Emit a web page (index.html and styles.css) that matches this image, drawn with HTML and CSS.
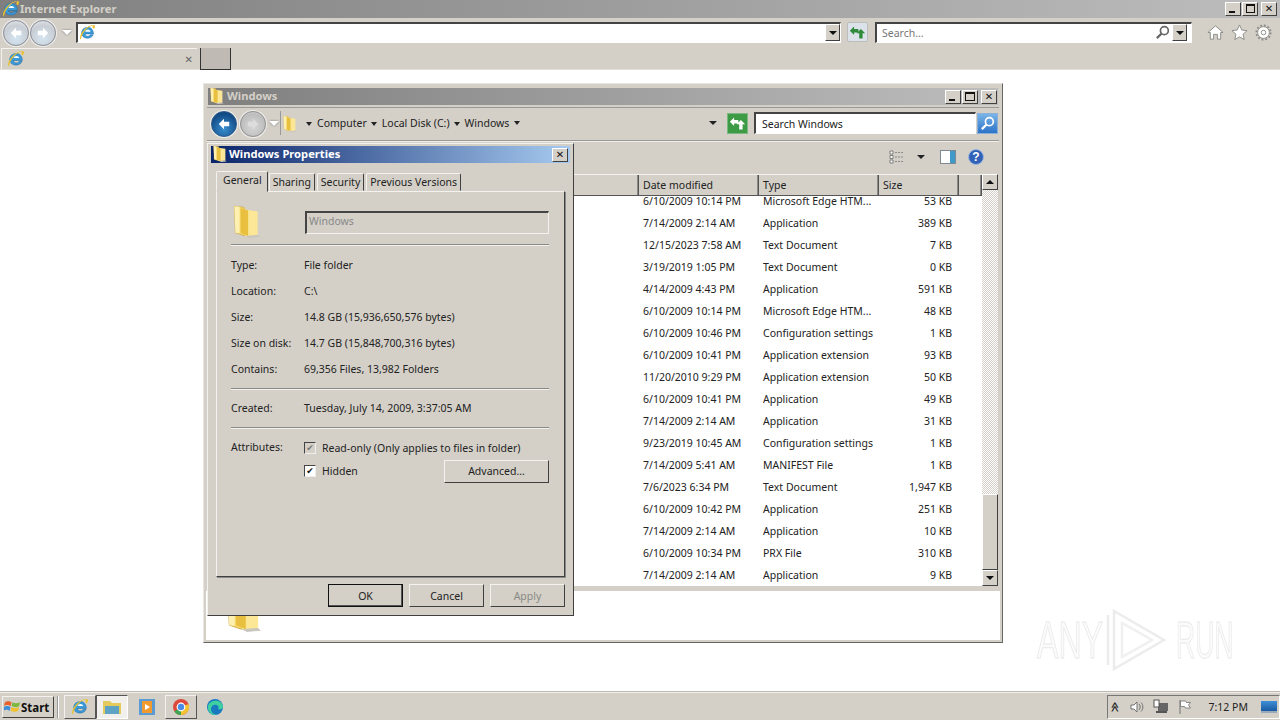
FILE: index.html
```html
<!DOCTYPE html>
<html lang="en">
<head>
    <meta charset="UTF-8">
    <title>Internet Explorer</title>
    <link rel="stylesheet" href="styles.css">
</head>
<body>
    <svg class="defs" width="0" height="0">
        <symbol id="ie" viewBox="0 0 20 20">
            <path d="M3 10.5a7 7 0 0 1 13.6-1.8c.3 1 .4 2 .4 3H7.2c.3 3 4 3.800 6.300 1h3.200c-2 4.500-8.700 5.300-12 2-1.300-1.200-1.700-2.600-1.700-4.200z" fill="#3a9bd8" stroke="#1c6aa8" stroke-width=".6"/>
            <path d="M7.300 9h6.200c-.4-3-5.800-3-6.200 0z" fill="#fff"/>
            <path d="M1.500 18C0 15 4 7 10 3.500 14 1 18 .5 18.800 2c.5 1-.3 2.600-1.300 4-.6-1-1.300-1.800-2-2.400 1-.6 1.500-1.300 1.200-1.700C15.800 1 7 4.500 3 15c-.6 1.500-.8 2.400-.5 3z" fill="#e8c22e"/>
        </symbol>
        <symbol id="folder" viewBox="0 0 26 32">
            <path d="M8 28l16 1 2 2-10 1z" fill="#c9c6be"/>
            <path d="M2 2l9 1 1 3v24l-9-3z" fill="#f5d76a" stroke="#c9a53c" stroke-width=".6"/>
            <path d="M11 5l13 2v22l-12 1z" fill="#fbe795"/>
            <path d="M8 4l7 2v24l-7-3z" fill="#e8bf3e"/>
            <path d="M2 2l5 .6v25L3 27z" fill="#fdf0b0"/>
        </symbol>
        <symbol id="arrow-left" viewBox="0 0 24 24">
            <path d="M5 12l7-7v4h7v6h-7v4z"/>
        </symbol>
        <symbol id="refresh" viewBox="0 0 20 20">
            <path d="M1 8l5-5v3h5v4H6v3zM14 6l5 5h-3v6h-4v-6H9z"/>
        </symbol>
        <symbol id="lens" viewBox="0 0 16 16">
            <circle cx="10" cy="6" r="4.200" fill="none" stroke="currentColor" stroke-width="1.800"/>
            <path d="M7 9l-5 5" stroke="currentColor" stroke-width="2.400" fill="none"/>
        </symbol>
    </svg>

    <div class="ie-title">
        <svg class="icon-16"><use href="#ie"/></svg>
        <span class="ie-title-text">Internet Explorer</span>
        <div class="caption-btns">
            <button class="cap-btn"><span class="glyph-min"></span></button>
            <button class="cap-btn"><span class="glyph-restore"></span></button>
            <button class="cap-btn cap-close">✕</button>
        </div>
    </div>

    <div class="ie-toolbar">
        <div class="nav-circle"><svg class="nav-arrow"><use href="#arrow-left"/></svg></div>
        <div class="nav-circle nav-forward"><svg class="nav-arrow"><use href="#arrow-left"/></svg></div>
        <span class="nav-drop"></span>
        <div class="field address">
            <svg class="icon-16"><use href="#ie"/></svg>
            <span class="drop-btn"><i></i></span>
        </div>
        <div class="go-btn"><svg class="go-icon"><use href="#refresh"/></svg></div>
        <div class="field search">
            <span class="placeholder">Search...</span>
            <svg class="search-lens"><use href="#lens"/></svg>
            <span class="drop-btn"><i></i></span>
        </div>
        <div class="ie-tools">
            <svg class="tool-icon" viewBox="0 0 18 18"><path d="M1 9l8-7 8 7h-2.500v7H11v-5H7v5H3.500V9z" fill="#fff" stroke="#8a8a86"/></svg>
            <svg class="tool-icon" viewBox="0 0 18 18"><path d="M9 1l2.400 5.400 5.600.6-4.200 3.800 1.200 5.700L9 13.600l-5 2.900 1.200-5.700L1 7l5.600-.6z" fill="#fff" stroke="#8a8a86"/></svg>
            <svg class="tool-icon" viewBox="0 0 18 18"><circle cx="9" cy="9" r="6.200" fill="#fff" stroke="#8a8a86" stroke-width="1"/><circle cx="9" cy="9" r="7.600" fill="none" stroke="#8a8a86" stroke-width="1.800" stroke-dasharray="2 2"/><circle cx="9" cy="9" r="2.400" fill="none" stroke="#8a8a86"/></svg>
        </div>
    </div>

    <div class="ie-tabs">
        <div class="tab-page">
            <svg class="icon-16"><use href="#ie"/></svg>
            <span class="tab-close">✕</span>
        </div>
        <div class="tab-new"></div>
    </div>

    <div class="page">
        <div class="watermark">
            <span class="wm-any">ANY</span>
            <svg class="wm-logo" viewBox="0 0 66 62"><path d="M3 6v50M9 2v58l50-29z" fill="none" stroke="#ececec" stroke-width="2.500"/><path d="M17 14v34l30-17z" fill="none" stroke="#f0f0f0" stroke-width="2.500"/></svg>
            <span class="wm-run">RUN</span>
        </div>

        <div class="explorer">
            <div class="exp-title">
                <svg class="icon-folder-sm"><use href="#folder"/></svg>
                <span>Windows</span>
                <div class="caption-btns">
                    <button class="cap-btn"><span class="glyph-min"></span></button>
                    <button class="cap-btn"><span class="glyph-max"></span></button>
                    <button class="cap-btn cap-close">✕</button>
                </div>
            </div>

            <div class="exp-address">
                <div class="nav-circle nav-blue"><svg class="nav-arrow"><use href="#arrow-left"/></svg></div>
                <div class="nav-circle nav-gray"><svg class="nav-arrow"><use href="#arrow-left"/></svg></div>
                <span class="nav-drop"></span>
                <div class="crumbs">
                    <svg class="icon-folder-sm crumb-folder"><use href="#folder"/></svg>
                    <span class="crumb">Computer</span>
                    <span class="crumb">Local Disk (C:)</span>
                    <span class="crumb">Windows</span>
                    <span class="crumb-tail"></span>
                    <span class="crumb-drop"></span>
                </div>
                <div class="go-green"><svg class="go-icon"><use href="#refresh"/></svg></div>
                <div class="field exp-search">Search Windows</div>
                <div class="search-blue"><svg class="blue-lens"><use href="#lens"/></svg></div>
            </div>

            <div class="exp-tools">
                <svg class="view-icon" viewBox="0 0 16 14"><path d="M1 1h3v3H1zM1 5.500h3v3H1zM1 10h3v3H1z" fill="#fff" stroke="#666" stroke-width=".8"/><path d="M6 2.500h9M6 7h9M6 11.500h9" stroke="#8a8a86" stroke-dasharray="2 1"/></svg>
                <span class="view-drop"></span>
                <svg class="pane-icon" viewBox="0 0 16 14"><rect x=".5" y=".5" width="15" height="13" fill="#fff" stroke="#7d8a96"/><rect x="10" y="1" width="5" height="12" fill="#3f9ac9"/></svg>
                <svg class="help-icon" viewBox="0 0 16 16"><circle cx="8" cy="8" r="7.500" fill="#3262b8" stroke="#9db7dd"/><text x="8" y="12" text-anchor="middle" class="help-q">?</text></svg>
            </div>

            <div class="listing">
                <div class="list-main">
                    <div class="list-head">
                        <div class="col-name head-cell"></div>
                        <div class="col-date head-cell">Date modified</div>
                        <div class="col-type head-cell">Type</div>
                        <div class="col-size head-cell">Size</div>
                        <div class="col-extra head-cell"></div>
                    </div>
                    <div class="list-body">
                        <div class="rows">
                            <div class="row"><span class="col-name"></span><span class="col-date">6/10/2009 10:14 PM</span><span class="col-type">Microsoft Edge HTM...</span><span class="col-size">53 KB</span></div>
                            <div class="row"><span class="col-name"></span><span class="col-date">7/14/2009 2:14 AM</span><span class="col-type">Application</span><span class="col-size">389 KB</span></div>
                            <div class="row"><span class="col-name"></span><span class="col-date">12/15/2023 7:58 AM</span><span class="col-type">Text Document</span><span class="col-size">7 KB</span></div>
                            <div class="row"><span class="col-name"></span><span class="col-date">3/19/2019 1:05 PM</span><span class="col-type">Text Document</span><span class="col-size">0 KB</span></div>
                            <div class="row"><span class="col-name"></span><span class="col-date">4/14/2009 4:43 PM</span><span class="col-type">Application</span><span class="col-size">591 KB</span></div>
                            <div class="row"><span class="col-name"></span><span class="col-date">6/10/2009 10:14 PM</span><span class="col-type">Microsoft Edge HTM...</span><span class="col-size">48 KB</span></div>
                            <div class="row"><span class="col-name"></span><span class="col-date">6/10/2009 10:46 PM</span><span class="col-type">Configuration settings</span><span class="col-size">1 KB</span></div>
                            <div class="row"><span class="col-name"></span><span class="col-date">6/10/2009 10:41 PM</span><span class="col-type">Application extension</span><span class="col-size">93 KB</span></div>
                            <div class="row"><span class="col-name"></span><span class="col-date">11/20/2010 9:29 PM</span><span class="col-type">Application extension</span><span class="col-size">50 KB</span></div>
                            <div class="row"><span class="col-name"></span><span class="col-date">6/10/2009 10:41 PM</span><span class="col-type">Application</span><span class="col-size">49 KB</span></div>
                            <div class="row"><span class="col-name"></span><span class="col-date">7/14/2009 2:14 AM</span><span class="col-type">Application</span><span class="col-size">31 KB</span></div>
                            <div class="row"><span class="col-name"></span><span class="col-date">9/23/2019 10:45 AM</span><span class="col-type">Configuration settings</span><span class="col-size">1 KB</span></div>
                            <div class="row"><span class="col-name"></span><span class="col-date">7/14/2009 5:41 AM</span><span class="col-type">MANIFEST File</span><span class="col-size">1 KB</span></div>
                            <div class="row"><span class="col-name"></span><span class="col-date">7/6/2023 6:34 PM</span><span class="col-type">Text Document</span><span class="col-size">1,947 KB</span></div>
                            <div class="row"><span class="col-name"></span><span class="col-date">6/10/2009 10:42 PM</span><span class="col-type">Application</span><span class="col-size">251 KB</span></div>
                            <div class="row"><span class="col-name"></span><span class="col-date">7/14/2009 2:14 AM</span><span class="col-type">Application</span><span class="col-size">10 KB</span></div>
                            <div class="row"><span class="col-name"></span><span class="col-date">6/10/2009 10:34 PM</span><span class="col-type">PRX File</span><span class="col-size">310 KB</span></div>
                            <div class="row"><span class="col-name"></span><span class="col-date">7/14/2009 2:14 AM</span><span class="col-type">Application</span><span class="col-size">9 KB</span></div>
                        </div>
                    </div>
                </div>
                <div class="scrollbar">
                    <div class="sb-btn"><i class="tri-up"></i></div>
                    <div class="sb-track"></div>
                    <div class="sb-thumb"></div>
                    <div class="sb-btn"><i class="tri-down"></i></div>
                </div>
            </div>
            <div class="details-pane">
                <svg class="details-folder"><use href="#folder"/></svg>
            </div>
        </div>

        <div class="dialog">
            <div class="dlg-title">
                <svg class="icon-folder-sm"><use href="#folder"/></svg>
                <span>Windows Properties</span>
                <button class="cap-btn cap-close">✕</button>
            </div>
            <div class="dlg-tabs">
                <div class="dlg-tab dlg-tab-on">General</div>
                <div class="dlg-tab">Sharing</div>
                <div class="dlg-tab">Security</div>
                <div class="dlg-tab">Previous Versions</div>
            </div>
            <div class="dlg-panel">
                <div class="name-row">
                    <svg class="big-folder"><use href="#folder"/></svg>
                    <div class="name-input">Windows</div>
                </div>
                <hr class="sep">
                <div class="props">
                    <div class="prop"><span class="prop-label">Type:</span><span>File folder</span></div>
                    <div class="prop"><span class="prop-label">Location:</span><span>C:\</span></div>
                    <div class="prop"><span class="prop-label">Size:</span><span>14.8 GB (15,936,650,576 bytes)</span></div>
                    <div class="prop"><span class="prop-label">Size on disk:</span><span>14.7 GB (15,848,700,316 bytes)</span></div>
                    <div class="prop"><span class="prop-label">Contains:</span><span>69,356 Files, 13,982 Folders</span></div>
                </div>
                <hr class="sep sep-contains">
                <div class="prop prop-created"><span class="prop-label">Created:</span><span>Tuesday, July 14, 2009, 3:37:05 AM</span></div>
                <hr class="sep sep-created">
                <div class="attrs">
                    <span class="prop-label">Attributes:</span>
                    <div class="attr-list">
                        <div class="attr-line">
                            <span class="check check-off">✔</span>
                            <span>Read-only (Only applies to files in folder)</span>
                        </div>
                        <div class="attr-line attr-hidden">
                            <span class="check">✔</span>
                            <span>Hidden</span>
                            <button class="btn btn-advanced">Advanced...</button>
                        </div>
                    </div>
                </div>
            </div>
            <div class="dlg-buttons">
                <button class="btn btn-default">OK</button>
                <button class="btn">Cancel</button>
                <button class="btn btn-disabled">Apply</button>
            </div>
        </div>
    </div>

    <div class="taskbar">
        <button class="start-btn">
            <svg class="start-flag" viewBox="0 0 18 16"><path d="M1 3c3-2 5-1 7 0L7 7C5 6 3 5 0 7z" fill="#e8622a"/><path d="M9 3c2 1 5 2 8 0l-1 4c-3 2-5 1-8 0z" fill="#7cb83e"/><path d="M0 8c3-2 5-1 7 0l-1 4c-2-1-4-2-7 0z" fill="#3f8ed8"/><path d="M8 8c2 1 5 2 8 0l-1 4c-3 2-5 1-8 0z" fill="#f0c030"/></svg>
            <span>Start</span>
        </button>
        <span class="task-grip"></span>
        <div class="task-btn task-ie"><svg class="icon-16"><use href="#ie"/></svg></div>
        <div class="task-btn task-active">
            <svg class="task-folder" viewBox="0 0 20 18"><path d="M1 3h7l2 2h9v11H1z" fill="#e6c95c"/><path d="M3 8h14v8H3z" fill="#5fa3c4"/></svg>
        </div>
        <div class="task-plain">
            <svg class="icon-16" viewBox="0 0 18 18"><rect x="1" y="1" width="16" height="16" fill="#5a9bd4"/><rect x="4" y="3" width="10" height="12" fill="#f29a2e"/><path d="M7 6l5 3-5 3z" fill="#fff"/></svg>
        </div>
        <div class="task-btn">
            <svg class="icon-16" viewBox="0 0 18 18"><circle cx="9" cy="9" r="8" fill="#dd4a3c"/><path d="M9 9L2.300 13.500A8 8 0 0 0 9 17z" fill="#3fa553"/><path d="M9 9l0 8a8 8 0 0 0 7.500-11z" fill="#f4c430"/><circle cx="9" cy="9" r="3.800" fill="#4a8be8" stroke="#fff" stroke-width="1.200"/></svg>
        </div>
        <div class="task-plain">
            <svg class="icon-16" viewBox="0 0 18 18"><circle cx="9" cy="9" r="8" fill="#1878c0"/><path d="M2 8c1-6 13-8 15 0 .5 3-3 4-5 3 2-2-1-5-4-4-4 1-4 7 0 9 1 .5 2 .5 3 .5C7 18 1 15 2 8z" fill="#3ed0a0"/></svg>
        </div>
        <div class="tray">
            <span class="tray-chev">≫</span>
            <svg class="tray-icon" viewBox="0 0 16 16"><path d="M2 6h3l3-3v10l-3-3H2z" fill="#fff" stroke="#707070"/><path d="M10 5c1.500 1.500 1.500 4.500 0 6M12 3.500c2.500 2.500 2.500 6.500 0 9" fill="none" stroke="#707070"/></svg>
            <svg class="tray-icon" viewBox="0 0 16 16"><rect x="5" y="4" width="10" height="8" fill="#666"/><rect x="1" y="1" width="5" height="7" fill="#fff" stroke="#555"/><path d="M3 13h11" stroke="#555" stroke-width="2"/></svg>
            <svg class="tray-icon" viewBox="0 0 16 16"><path d="M3 1v14" stroke="#707070"/><path d="M3.500 2h5l1 1.500h4L11.500 6l2 3h-5l-1-1.500h-4z" fill="#fff" stroke="#707070" stroke-width=".8"/></svg>
            <span class="clock">7:12 PM</span>
            <span class="show-desktop"></span>
        </div>
    </div>
</body>
</html>
```

FILE: styles.css
```css
* {
    margin: 0;
    padding: 0;
    box-sizing: border-box;
}

body {
    width: 1280px;
    height: 720px;
    overflow: hidden;
    display: flex;
    flex-direction: column;
    background: #d4d0c8;
    font-family: 'Noto Sans', 'DejaVu Sans', sans-serif;
    font-size: 10.5px;
    color: #222;
    position: relative;
}

.defs {
    position: absolute;
}

svg {
    display: block;
    flex: none;
    fill: currentColor;
}

.icon-16 {
    width: 18px;
    height: 18px;
}

.icon-folder-sm {
    width: 15px;
    height: 17px;
}

/* shared bits */
.caption-btns {
    margin-left: auto;
    display: flex;
    gap: 1px;
}

.cap-btn {
    width: 16px;
    height: 14px;
    background: #d4d0c8;
    border: 1px solid;
    border-color: #fff #404040 #404040 #fff;
    font-size: 10px;
    font-weight: bold;
    line-height: 11px;
    color: #111;
    font-family: 'DejaVu Sans', sans-serif;
    display: flex;
    align-items: center;
    justify-content: center;
}

.cap-close {
    margin-left: 2px;
}

.glyph-min {
    width: 6px;
    height: 2px;
    background: #111;
    margin-top: 7px;
    margin-right: 3px;
}

.glyph-max {
    width: 10px;
    height: 9px;
    border: 1px solid #111;
    border-top-width: 2px;
}

.glyph-restore {
    width: 9px;
    height: 9px;
    border: 1px solid #111;
    border-top-width: 2px;
    box-shadow: inset 2px -2px 0 #d4d0c8;
}

.nav-circle {
    width: 26px;
    height: 26px;
    border-radius: 50%;
    border: 1px solid #8a8f98;
    background: radial-gradient(circle at 50% 70%, #d4e6f2, #c9cdd4 60%, #eef0f2);
    box-shadow: 0 0 0 1px #eee;
    display: flex;
    align-items: center;
    justify-content: center;
    color: #fff;
}

.nav-arrow {
    width: 18px;
    height: 18px;
}

.nav-forward .nav-arrow {
    transform: scaleX(-1);
}

.nav-blue {
    background: radial-gradient(circle at 50% 70%, #3a8fd0, #14508c 65%, #0f3c70);
    border-color: #2a5a8a;
}

.nav-gray {
    background: radial-gradient(circle at 50% 60%, #d8d8d8, #bdbdbd 65%, #e6e6e6);
    border-color: #909090;
    color: #ddd;
}

.nav-gray .nav-arrow {
    transform: scaleX(-1);
}

.nav-drop {
    width: 0;
    height: 0;
    border: 5px solid transparent;
    border-top: 5px solid #fff;
    border-bottom: 0;
    filter: drop-shadow(0 0 1px #777);
}

.field {
    background: #fff;
    border: 1px solid;
    border-color: #444 #fff #fff #444;
    border-width: 2px 1px 1px 2px;
    display: flex;
    align-items: center;
}

.drop-btn {
    margin-left: auto;
    width: 15px;
    height: 17px;
    background: #d4d0c8;
    border: 1px solid;
    border-color: #fff #404040 #404040 #fff;
    display: flex;
    align-items: center;
    justify-content: center;
}

.drop-btn i {
    border: 4px solid transparent;
    border-top: 4px solid #111;
    border-bottom: 0;
}

/* IE chrome */
.ie-title {
    height: 18px;
    flex: none;
    display: flex;
    align-items: center;
    padding: 0 3px 1px 2px;
    background: linear-gradient(90deg, #7f7f7f, #bdbdbd);
    color: #d4d0c8;
    font-weight: bold;
    font-size: 11.2px;
}

.ie-title-text {
    margin-left: 0;
}

.ie-toolbar {
    height: 28px;
    flex: none;
    display: flex;
    align-items: center;
    padding-left: 3px;
}

.ie-toolbar .nav-circle {
    margin: 1px 1px 0 0;
}

.ie-toolbar .nav-drop {
    margin: 0 4px 0 5px;
}

.address {
    width: 765px;
    height: 21px;
    padding-left: 1px;
}

.address .icon-16 {
    width: 17px;
    height: 17px;
}

.go-btn {
    width: 21px;
    height: 20px;
    margin: 0 7px 0 6px;
    border-radius: 2px;
    background: #dbe2ea;
    border: 1px solid #bdbdbd;
    color: #2f8a3a;
    display: flex;
    align-items: center;
    justify-content: center;
}

.go-icon {
    width: 17px;
    height: 17px;
}

.search {
    width: 317px;
    height: 21px;
    padding-left: 5px;
    padding-right: 4px;
}

.placeholder {
    color: #777;
}

.search-lens {
    margin-left: auto;
    margin-right: 2px;
    width: 15px;
    height: 15px;
    color: #666;
}

.search .drop-btn {
    margin-left: 0;
}

.ie-tools {
    display: flex;
    gap: 7px;
    margin-left: 15px;
}

.tool-icon {
    width: 17px;
    height: 17px;
}

.ie-tabs {
    height: 24px;
    flex: none;
    display: flex;
    padding: 2px 0 0 1px;
    border-bottom: 1px solid #e4e1da;
}

.tab-page {
    width: 196px;
    display: flex;
    align-items: center;
    padding-left: 5px;
    border-top: 1px solid #f4f2ee;
    border-left: 1px solid #f4f2ee;
}

.tab-close {
    margin-left: auto;
    margin-right: 4px;
    font-size: 10px;
    font-weight: bold;
    color: #666;
}

.tab-new {
    width: 31px;
    margin-left: 3px;
    background: #bfbab4;
    border: 1px solid #333;
    border-top: 0;
    height: 22px;
}

.page {
    flex: 1;
    background: #fff;
    position: relative;
}

/* watermark */
.watermark {
    position: absolute;
    left: 1037px;
    top: 539px;
    height: 62px;
    display: flex;
    align-items: center;
    font-family: 'Liberation Sans', sans-serif;
    font-size: 51px;
    color: #fbfbfb;
    -webkit-text-stroke: 1px #e8e8e8;
}

.watermark span {
    display: block;
    white-space: nowrap;
    transform-origin: left center;
}

.wm-any {
    width: 66px;
    transform: scaleX(.63);
}

.wm-run {
    width: 58px;
    margin-left: 5px;
    transform: scaleX(.52);
}

.wm-logo {
    width: 66px;
    height: 62px;
    margin-left: 2px;
}

/* explorer window */
.explorer {
    position: absolute;
    left: 203px;
    top: 13px;
    width: 800px;
    height: 560px;
    padding: 4px;
    background: #d4d0c8;
    border: 1px solid;
    border-color: #e8e6e0 #666 #666 #e8e6e0;
    display: flex;
    flex-direction: column;
}

.exp-title {
    height: 17px;
    flex: none;
    display: flex;
    align-items: center;
    gap: 3px;
    padding: 0 1px 2px 1px;
    margin-bottom: 2px;
    background: linear-gradient(90deg, #7f7f7f, #bdbdbd);
    color: #d4d0c8;
    font-weight: bold;
    font-size: 11.2px;
}

.exp-title .caption-btns {
    margin-top: 2px;
}

.exp-address {
    height: 34px;
    flex: none;
    display: flex;
    align-items: center;
    padding: 0 0 2px 3px;
    border-top: 1px solid #999;
    border-bottom: 1px solid #999;
    box-shadow: 0 1px 0 #f0eee8;
    margin: 0 -1px;
}

.exp-address .nav-circle {
    margin: 2px 3px 0 0;
}

.exp-address .nav-blue {
    margin-left: 1px;
}

.exp-address .nav-drop {
    margin: 0 1px 0 0;
}

.crumbs {
    width: 443px;
    height: 24px;
    display: flex;
    align-items: center;
    gap: 4px;
    padding-left: 1px;
    border-left: 1px solid #999;
}

.crumb-folder {
    margin-right: 5px;
}

.crumb {
    padding-left: 11px;
    position: relative;
}

.crumb::before {
    content: "";
    position: absolute;
    left: 0;
    top: 6px;
    border: 3px solid transparent;
    border-top: 4px solid #222;
    border-bottom: 0;
}

.crumb-tail {
    width: 0;
    height: 0;
    margin-left: 1px;
    border: 3px solid transparent;
    border-top: 4px solid #222;
    border-bottom: 0;
}

.crumb-drop {
    margin-left: auto;
    margin-right: 6px;
    border: 4px solid transparent;
    border-top: 4px solid #222;
    border-bottom: 0;
}

.go-green {
    width: 21px;
    height: 21px;
    margin: 0 6px 0 4px;
    background: #3d9a45;
    border: 1px solid #7bb880;
    color: #fff;
    display: flex;
    align-items: center;
    justify-content: center;
}

.exp-search {
    width: 222px;
    height: 22px;
    padding-left: 6px;
    color: #222;
}

.search-blue {
    width: 21px;
    height: 21px;
    margin-left: 1px;
    background: linear-gradient(#7ab4e8, #2c74c8);
    border: 1px solid #8ab0d8;
    color: #fff;
    display: flex;
    align-items: center;
    justify-content: center;
}

.blue-lens {
    width: 15px;
    height: 15px;
}

.exp-tools {
    height: 33px;
    flex: none;
    display: flex;
    align-items: center;
    justify-content: flex-end;
    padding: 0 14px 1px 0;
}

.view-icon {
    width: 16px;
    height: 14px;
}

.view-drop {
    margin: 0 15px 0 12px;
    border: 4px solid transparent;
    border-top: 4px solid #222;
    border-bottom: 0;
}

.pane-icon {
    width: 16px;
    height: 14px;
    margin-right: 12px;
}

.help-icon {
    width: 16px;
    height: 16px;
}

.help-q {
    fill: #fff;
    font-size: 12px;
    font-weight: bold;
    font-family: 'Liberation Sans', sans-serif;
}

.listing {
    height: 417px;
    flex: none;
    display: flex;
    background: #fff;
    border-bottom: 5px solid #d4d0c8;
}

.list-main {
    width: 775px;
    display: flex;
    flex-direction: column;
}

.list-head {
    display: flex;
    height: 22px;
    flex: none;
    background: #d4d0c8;
    border-top: 1px solid #f4f2ee;
    border-bottom: 1px solid #555;
}

.head-cell {
    padding: 3px 0 0 4px;
    border-right: 1px solid #555;
    box-shadow: inset -1px 0 0 #8a8a86;
}

.col-name {
    width: 430px;
    flex: none;
}

.list-head .col-name {
    width: 431px;
}

.col-date {
    width: 120px;
    flex: none;
}

.col-type {
    width: 120px;
    flex: none;
}

.col-size {
    width: 80px;
    flex: none;
}

.col-extra {
    flex: 1;
}

.list-body {
    flex: 1;
    overflow: hidden;
}

.rows {
    margin-top: -6px;
}

.row {
    display: flex;
    height: 22px;
    align-items: center;
}

.row .col-date {
    padding-left: 5px;
}

.row .col-type {
    padding-left: 5px;
    white-space: nowrap;
}

.row .col-size {
    text-align: right;
    padding-right: 6px;
}

.scrollbar {
    width: 16px;
    display: flex;
    flex-direction: column;
    background-color: #fff;
    background-image: repeating-conic-gradient(#d4d0c8 0 25%, #fff 0 50%);
    background-size: 2px 2px;
}

.sb-btn {
    height: 16px;
    flex: none;
    background: #d4d0c8;
    border: 1px solid;
    border-color: #fff #404040 #404040 #fff;
    display: flex;
    align-items: center;
    justify-content: center;
}

.tri-up {
    border: 4px solid transparent;
    border-bottom: 4px solid #111;
    border-top: 0;
}

.tri-down {
    border: 4px solid transparent;
    border-top: 4px solid #111;
    border-bottom: 0;
}

.sb-track {
    flex: 1;
}

.sb-thumb {
    height: 76px;
    flex: none;
    background: #d4d0c8;
    border: 1px solid;
    border-color: #fff #404040 #404040 #fff;
}

.details-pane {
    flex: 1;
    background: #fff;
    margin: 0 -2px -2px;
    padding-left: 19px;
    overflow: hidden;
}

.details-folder {
    width: 36px;
    height: 44px;
    margin-top: -3px;
}

/* properties dialog */
.dialog {
    position: absolute;
    left: 207px;
    top: 73px;
    width: 367px;
    height: 473px;
    padding: 2px 3px 3px;
    background: #d4d0c8;
    border: 1px solid;
    border-color: #f4f2ee #404040 #404040 #f4f2ee;
    display: flex;
    flex-direction: column;
}

.dlg-title {
    height: 17px;
    flex: none;
    display: flex;
    align-items: center;
    gap: 2px;
    padding: 0 2px 2px 1px;
    background: linear-gradient(90deg, #0a246a, #a6caf0);
    color: #fff;
    font-weight: bold;
    font-size: 11.2px;
}

.dlg-title .cap-btn {
    margin: 2px 0 0 auto;
}

.dlg-tabs {
    display: flex;
    align-items: flex-end;
    height: 23px;
    margin: 5px 0 0 5px;
    gap: 2px;
    position: relative;
    z-index: 1;
}

.dlg-tab {
    height: 18px;
    padding: 0 3px;
    border: 1px solid;
    border-color: #f4f2ee #404040 transparent #f4f2ee;
    border-radius: 2px 2px 0 0;
    line-height: 17px;
}

.dlg-tab-on {
    height: 21px;
    padding: 0 5px 0 6px;
    line-height: 17px;
    margin-bottom: -1px;
    margin-right: -1px;
    background: #d4d0c8;
}

.dlg-panel {
    height: 386px;
    flex: none;
    margin: 0 5px;
    padding: 12px 15px 0 14px;
    border: 1px solid;
    border-color: #f4f2ee #404040 #404040 #f4f2ee;
    box-shadow: 1px 1px 0 #8a8a86;
}

.name-row {
    display: flex;
    align-items: flex-start;
}

.big-folder {
    width: 28px;
    height: 34px;
    margin: 0 45px 0 1px;
}

.name-input {
    width: 246px;
    height: 23px;
    margin-top: 7px;
    padding-left: 2px;
    color: #888;
    border: 1px solid;
    border-color: #444 #f4f2ee #f4f2ee #444;
    border-width: 2px 1px 1px 2px;
    line-height: 16px;
}

.sep {
    border: 0;
    border-top: 1px solid #8a8a86;
    border-bottom: 1px solid #f4f2ee;
    height: 2px;
    width: 318px;
    margin-top: 6px;
}

.props {
    display: flex;
    flex-direction: column;
    gap: 10px;
    margin-top: 11px;
}

.prop {
    display: flex;
    height: 16px;
    align-items: center;
}

.prop-label {
    width: 73px;
    flex: none;
}

.sep-contains {
    margin-top: 11px;
}

.prop-created {
    margin-top: 10px;
}

.sep-created {
    margin-top: 11px;
}

.attrs {
    display: flex;
    margin-top: 10px;
}

.attrs .prop-label {
    height: 16px;
    line-height: 16px;
}

.attr-list {
    flex: 1;
    margin-top: 1px;
}

.attr-line {
    display: flex;
    align-items: center;
    gap: 6px;
    height: 16px;
}

.attr-hidden {
    margin-top: 7px;
}

.check {
    width: 12px;
    height: 12px;
    background: #fff;
    color: #111;
    border: 1px solid;
    border-color: #444 #eee #eee #444;
    font-size: 9px;
    line-height: 10px;
    text-align: center;
    font-family: 'DejaVu Sans', sans-serif;
    overflow: hidden;
}

.check-off {
    background: #d4d0c8;
    color: #777;
}

.btn {
    width: 75px;
    height: 23px;
    background: #d4d0c8;
    border: 1px solid;
    border-color: #f4f2ee #404040 #404040 #f4f2ee;
    font: inherit;
    color: #222;
}

.btn-default {
    border: 1px solid #111;
    box-shadow: inset -1px -1px 0 #555;
}

.btn-disabled {
    color: #8a8a86;
}

.btn-advanced {
    width: 105px;
    margin-left: auto;
    margin-right: 0;
}

.dlg-buttons {
    display: flex;
    justify-content: flex-end;
    gap: 6px;
    padding: 7px 5px 0 0;
}

/* taskbar */
.taskbar {
    height: 28px;
    flex: none;
    display: flex;
    align-items: center;
    padding: 1px 0 0 2px;
    border-top: 1px solid #f0eee8;
    box-shadow: 0 -1px 0 #bdb9b1;
    position: relative;
}

.start-btn {
    width: 52px;
    height: 22px;
    display: flex;
    align-items: center;
    gap: 0;
    padding-left: 1px;
    background: #d4d0c8;
    border: 1px solid;
    border-color: #f4f2ee #404040 #404040 #f4f2ee;
    font: bold 11.5px 'Noto Sans', sans-serif;
    color: #111;
}

.start-flag {
    width: 17px;
    height: 16px;
}

.task-grip {
    width: 2px;
    height: 22px;
    margin: 0 5px 0 3px;
    border-left: 1px solid #999;
    border-right: 1px solid #fff;
}

.task-btn {
    width: 32px;
    height: 24px;
    margin-right: 2px;
    display: flex;
    align-items: center;
    justify-content: center;
    border: 1px solid;
    border-color: #f4f2ee #555 #555 #f4f2ee;
}

.task-ie {
    margin-right: 0;
}

.task-active {
    width: 32px;
    margin-right: 3px;
    background: #f2f0ec;
    border-color: #555 #fff #fff #555;
}

.task-folder {
    width: 20px;
    height: 18px;
}

.task-plain {
    width: 32px;
    display: flex;
    justify-content: center;
    margin-right: 2px;
}

.tray {
    margin-left: auto;
    width: 173px;
    height: 24px;
    display: flex;
    align-items: center;
    padding-left: 1px;
    border: 1px solid;
    border-color: #777 #fff #fff #777;
}

.tray-chev {
    transform: rotate(-90deg);
    font-size: 10px;
    font-weight: bold;
    margin-right: 10px;
}

.tray-icon {
    width: 16px;
    height: 16px;
    margin-right: 8px;
}

.clock {
    margin-left: 7px;
    font-size: 10.5px;
}

.show-desktop {
    margin-left: auto;
    margin-right: 2px;
    width: 16px;
    height: 12px;
    background: linear-gradient(#3f8fd8, #1a5aa0);
    border-bottom: 2px solid #9ab;
}
```
